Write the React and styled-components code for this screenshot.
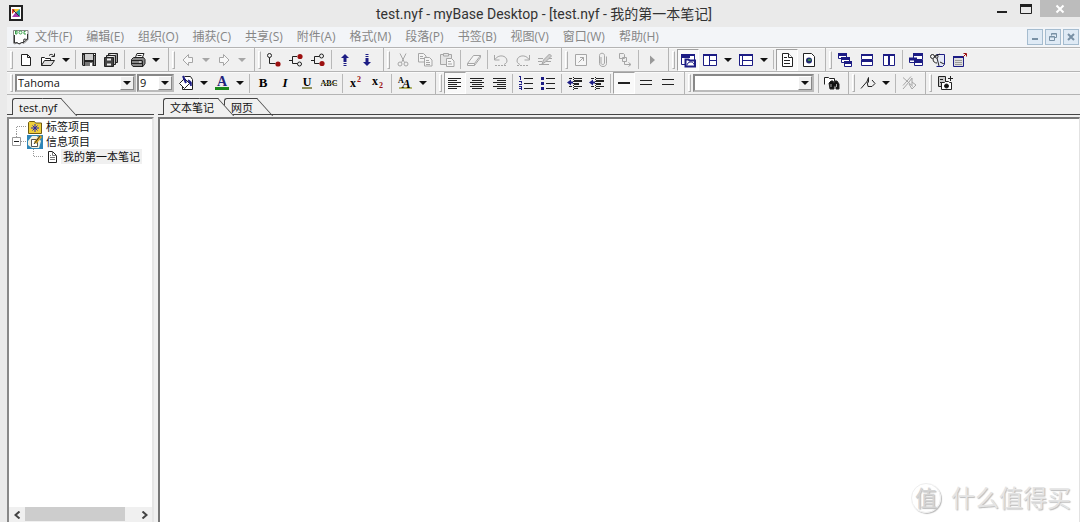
import React, { useState } from 'react'
import styled, { createGlobalStyle } from 'styled-components'

const navy = '#1c1c84'
const ink = '#222'
const faded = '#a6a6a6'
const red = '#9c1010'

const icons = {
    page: <path d="M3.5 2.5h6l3 3v8h-9zM9.5 2.5v3h3" fill="#fff" stroke={ink} />,
    open: (
        <g fill="none" stroke={ink}>
            <path d="M1.5 13.5v-8h3l1 1h5v2" fill="#fff" />
            <path d="M1.5 13.5l3-5h10l-3.5 5z" fill="#ddd" />
            <path d="M9 3.5c1.5-1.5 3-1.5 4.5 0M14.5 1.5v3h-3" />
        </g>
    ),
    save: (
        <g>
            <path d="M1 1h14v13h-13l-1-1z" fill={ink} />
            <path d="M4 2h8v6h-8z" fill="#ccc" />
            <path d="M4 10h8v4h-8z" fill="#777" />
            <path d="M9 11h2v3h-2zM13 2h1v1h-1z" fill="#fff" />
            <path d="M2.5 3v10M13.5 4v9" stroke="#888" />
        </g>
    ),
    saveAll: (
        <g stroke={ink}>
            <path d="M5.5 1.5h9v9h-9z" fill="#999" />
            <path d="M3.5 3.5h9v9h-9z" fill="#bbb" />
            <path d="M1.5 5.5h9v9h-9z" fill="#444" />
            <path d="M4 7.5h4M4 12.5h4" stroke="#eee" strokeWidth="2" />
            <path d="M7.5 2.5h5M5.5 4.5h5" stroke="#eee" />
        </g>
    ),
    print: (
        <g stroke={ink}>
            <path d="M5 6.5l2-5h7l-2 5" fill="#fff" />
            <path d="M1.5 7.5l2-2h10l1.5 2v4l-2 3h-10l-1.5-2z" fill="#888" />
            <path d="M2 8.5h10M2 11.5h10M12.5 8.5v5.5M7.5 3.5h4" />
            <path d="M9 10h2" stroke="#fff" />
        </g>
    ),
    back: <path d="M3 8l5.5-5.5v3h4v5h-4v3z" fill="#f7f7f7" stroke={faded} />,
    forward: <path d="M13 8l-5.5-5.5v3h-4v5h4v3z" fill="#f7f7f7" stroke={faded} />,
    addSub: (
        <g fill="none" stroke={ink}>
            <circle cx="3.500" cy="3.5" r="2" />
            <path d="M3.5 5.500v6h6" />
            <circle cx="12" cy="12" r="2.600" fill={red} stroke="none" />
        </g>
    ),
    addBefore: (
        <g fill="none" stroke={ink}>
            <path d="M9 4.5h-4.5v7h5M1 8.5h3.500" />
            <circle cx="11.5" cy="12" r="2" />
            <circle cx="12" cy="4.500" r="2.600" fill={red} stroke="none" />
        </g>
    ),
    addAfter: (
        <g fill="none" stroke={ink}>
            <path d="M9 4.5h-4.5v7h5M1 8.5h3.500" />
            <circle cx="11.5" cy="4" r="2" />
            <circle cx="12" cy="11.500" r="2.600" fill={red} stroke="none" />
        </g>
    ),
    up: <path d="M8 2l4 4h-2.500v4h-3v-4h-2.500zM6.500 11h3v1h-3zM6.500 13h3v1h-3z" fill={navy} />,
    down: <path d="M8 14l-4-4h2.500v-4h3v4h2.500zM6.500 4h3v1h-3zM6.500 2h3v1h-3z" fill={navy} />,
    cut: (
        <g fill="none" stroke={faded}>
            <path d="M5 1.5l4.500 9M11 1.5l-4.500 9" />
            <circle cx="5" cy="12" r="2" />
            <circle cx="11" cy="12" r="2" />
        </g>
    ),
    copy: (
        <g fill="#f4f4f4" stroke={faded}>
            <path d="M1.5 1.5h5l2.500 2.500v6h-7.500z" />
            <path d="M7.5 5.5h5l2.500 2.500v6h-7.500z" />
            <path d="M3 4.5h3M3 6.5h4M9 8.5h3M9 10.5h4M9 12.5h4" />
        </g>
    ),
    paste: (
        <g fill="#e4e4e4" stroke={faded}>
            <path d="M1.5 2.5h11v10h-11z" />
            <path d="M4.5 1.5h5v2.500h-5z" />
            <path d="M7.5 6.5h5l2.500 2.500v5.500h-7.500z" fill="#f6f6f6" />
            <path d="M9 9.5h3M9 12h4" />
        </g>
    ),
    eraser: <path d="M1.5 11.5l6-8h7l-6 8zM1.5 11.5v2h7l6-8v-2M8.5 11.5v2" fill="#f6f6f6" stroke={faded} />,
    undo: (
        <g fill="none" stroke={faded}>
            <path d="M1.5 3v5h5M2 7.5c3-5.500 12-4.500 12 1.500 0 2-2 3-3 3.500" />
            <path d="M2 13.5h12" strokeDasharray="2 1" />
        </g>
    ),
    redo: (
        <g fill="none" stroke={faded}>
            <path d="M14.5 3v5h-5M14 7.5c-3-5.500-12-4.500-12 1.500 0 2 2 3 3 3.500" />
            <path d="M2 13.5h12" strokeDasharray="2 1" />
        </g>
    ),
    brush: (
        <g fill="none" stroke={faded}>
            <path d="M5 12l1.500-4 6-6 2 2-6 6z" fill="#ccc" />
            <path d="M1 6.5h5M1 9.5h4M9 9.5h5M2 12.5h10M12 6.5h3" />
        </g>
    ),
    link: (
        <g fill="none" stroke={faded}>
            <path d="M2.5 2.5h11v11h-11z" fill="#f6f6f6" />
            <path d="M5.5 10.5l5-5M7 5.5h3.500v3.500" />
        </g>
    ),
    clip: <path d="M6 5v6c0 2 3.500 2 3.500 0v-7.500c0-3-5-3-5 0v8c0 4 7 4 7 0v-7" fill="none" stroke={faded} />,
    moveTo: (
        <g fill="none" stroke={faded}>
            <path d="M2.5 1.5h4l1 1v4h-5zM5.5 5.5h4v4h-4z" fill="#eee" />
            <path d="M7.5 10v2.500h6M11.500 10.5l2.500 2-2.500 2" />
        </g>
    ),
    play: <path d="M6 3.5l5 4.500-5 4.500z" fill="#999" />,
    layoutTree: (
        <g fill="#fff" stroke={navy}>
            <path d="M1.5 2.5h13v10h-13z" />
            <path d="M1 3h14M1 5h9" strokeWidth="2" />
            <path d="M5.5 14.5v-7h3l1 1h5.500v6z" strokeWidth="2" />
            <path d="M7 13.500c0-4 6-5 7-1" fill="none" />
        </g>
    ),
    layoutSplit: (
        <g fill="#fff" stroke={navy}>
            <path d="M1.5 2.5h13v11h-13z" />
            <path d="M1 3h14" strokeWidth="2" />
            <path d="M7.5 3v11M8 8.5h6" />
        </g>
    ),
    layoutList: (
        <g fill="#fff" stroke={navy}>
            <path d="M1.5 2.5h13v11h-13z" />
            <path d="M1 3h14" strokeWidth="2" />
            <path d="M4.5 3v11M5 8.5h9" />
        </g>
    ),
    note: (
        <g fill="#fff" stroke={ink}>
            <path d="M3.5 1.5h6l4 4v9h-10z" />
            <path d="M9.5 1.5v4h4M5 5.5h3M5 8.5h6M5 11.5h6" />
        </g>
    ),
    web: (
        <g fill="#fff" stroke={ink}>
            <path d="M2.5 1.5h8l3 3v10h-11z" />
            <circle cx="8" cy="8.500" r="3" fill="#222b70" stroke="none" />
            <path d="M7 7h3v2h-3z" fill="#3c8b45" stroke="none" />
        </g>
    ),
    cascade: (
        <g fill="#fff" stroke={navy}>
            <path d="M1.5 1.5h8v5h-8zM4.5 5.5h8v5h-8zM7.5 9.5h7v5h-7z" />
            <path d="M1 2.5h9M4 6.5h9M7 10.5h8" strokeWidth="3" />
        </g>
    ),
    tileRows: (
        <g fill="#fff" stroke={navy}>
            <path d="M2.5 2.5h11v5h-11zM2.5 8.5h11v5h-11z" />
            <path d="M2 3h12M2 9h12" strokeWidth="2" />
        </g>
    ),
    tileColumns: (
        <g fill="#fff" stroke={navy}>
            <path d="M2.5 2.5h5v11h-5zM8.5 2.5h5v11h-5z" />
            <path d="M2 3h12" strokeWidth="2" />
        </g>
    ),
    windows: (
        <g fill="#fff" stroke={navy}>
            <path d="M5.5 1.5h9v6h-9zM1.5 6.5h7v4h-7zM6.5 8.5h8v5h-8z" />
            <path d="M5 2.5h10M1 7h8M6 9.5h9" strokeWidth="3" />
        </g>
    ),
    relations: (
        <g fill="none" stroke={ink}>
            <path d="M6.5 2.5h8v10l-2 2h-6" stroke={navy} fill="#e4e8f6" />
            <circle cx="2.500" cy="4.500" r="2" />
            <circle cx="6.500" cy="4.500" r="1.500" />
            <path d="M4 5l6-3M3 7c0 3 2 4 4 4M7 6l2 8M10 10l4 2" />
        </g>
    ),
    popup: (
        <g fill="#ddd" stroke={navy}>
            <path d="M1.5 4.5h10v10h-10z" />
            <path d="M1 5h11" strokeWidth="2" />
            <path d="M3 8.5h7M3 10.5h7M3 12.5h7" stroke="#999" />
            <path d="M11 5l3-3M11.5 1.5h3v3" stroke={red} fill="none" />
        </g>
    ),
    fill: (
        <g fill="#fff" stroke={ink}>
            <path d="M6.5 1.5h6l2 3v10h-10v-9" />
            <path d="M1.5 8.5l5-5 5 5-5 5z" />
            <path d="M5 1l3 7" stroke={navy} strokeWidth="2" />
            <path d="M10 5c3 1 4 2 3 6l-2-4z" fill={navy} stroke={navy} />
        </g>
    ),
    fontColor: (
        <g>
            <text x="8" y="11" textAnchor="middle" fontSize="14" fill="#23237c">A</text>
            <path d="M1 12h14v3h-14z" fill="#1b8a1b" />
        </g>
    ),
    underline: (
        <g>
            <text x="8" y="11" textAnchor="middle" fontSize="12">U</text>
            <path d="M3 12h10v2h-10z" fill="#8c8c58" />
        </g>
    ),
    strike: (
        <g>
            <text x="8" y="11" textAnchor="middle" fontSize="8">ABC</text>
            <path d="M0 8h16v1h-16z" fill="#8c8c58" />
        </g>
    ),
    bold: <text x="8" y="12" textAnchor="middle" fontSize="13">B</text>,
    italic: <text x="8" y="12" textAnchor="middle" fontSize="13" fontStyle="italic">I</text>,
    superscript: (
        <g>
            <text x="2" y="12" fontSize="12">x</text>
            <text x="9" y="7" fontSize="8" fill={red}>2</text>
        </g>
    ),
    subscript: (
        <g>
            <text x="2" y="10" fontSize="12">x</text>
            <text x="9" y="13" fontSize="8" fill={red}>2</text>
        </g>
    ),
    fontStyle: (
        <g>
            <path d="M2 12h13v2h-13z" fill="#b5b56a" />
            <text x="1" y="8" fontSize="8">A</text>
            <text x="5" y="13" fontSize="13" fontStyle="italic">A</text>
        </g>
    ),
    alignLeft: <path d="M1 3.5h13M1 5.5h9M1 7.5h13M1 9.5h9M1 11.5h13M1 13.5h9" stroke={ink} />,
    alignCenter: <path d="M1 3.5h14M3 5.5h10M1 7.5h14M3 9.5h10M1 11.5h14M3 13.5h10" stroke={ink} />,
    alignRight: <path d="M2 3.5h13M6 5.5h9M2 7.5h13M6 9.5h9M2 11.5h13M6 13.5h9" stroke={ink} />,
    numbers: (
        <g>
            <path d="M6 3.5h9M6 8.5h9M6 13.5h9" stroke={ink} />
            <path d="M2.5 1v4M1 1.5h2M1 6.5h3M3.5 7v1.500M1 9.5h3M1 11.5h3M1 13.5h3M3.5 11v4" stroke={navy} />
        </g>
    ),
    bullets: (
        <g>
            <path d="M6 3.5h9M6 8.5h9M6 13.5h9" stroke={ink} />
            <path d="M1 2h3v3h-3zM1 7h3v3h-3zM1 12h3v3h-3z" fill={navy} />
        </g>
    ),
    outdent: (
        <g>
            <path d="M7 3.5h8M7 11.5h8M7 13.5h4" stroke={ink} />
            <path d="M7 6h8M7 9h5" stroke={ink} strokeWidth="2" />
            <path d="M2 3.5h3M2 11.5h3" stroke={ink} />
            <path d="M0 7.5l4-3v2h2v2h-2v2z" fill={navy} />
            <path d="M6.5 2v13" stroke={ink} strokeDasharray="1 1" />
        </g>
    ),
    lineSingle: <path d="M2 8h12" stroke={ink} strokeWidth="2" />,
    lineHalf: <path d="M2 5.5h12M2 9.5h12" stroke={ink} />,
    lineDouble: <path d="M2 4.5h12M2 9.5h12" stroke={ink} />,
    find: (
        <g stroke={ink}>
            <path d="M0.5 9.5v-7h4l1 1h5v3" fill="#fff" />
            <path d="M5 8l2-2h2l1 2 1-2h2l2 3v5h-3v-3h-2v3h-4z" fill="#111" />
            <path d="M7 9v3M12.500 9v3" stroke="#aaa" />
        </g>
    ),
    marker: <path d="M1 13.5l6-7 1.500-4v5M7 6.500l1 5h4l3-3-3-3.500" fill="none" stroke={ink} />,
    markerOff: <path d="M2 14l6-7 3-4v7M8 9l3 5 4-4-4-3M2 2.5l10 9M10 1.5l-8 9" fill="none" stroke={faded} />,
    snapshot: (
        <g stroke={ink}>
            <path d="M1.5 1.5h7v10h-7z" fill="#ccc" />
            <path d="M3 4.5h3M3 7.5h3M11 3.5h5M13.5 1v5" />
            <path d="M4.5 7.5h3l1-1h3l1 1h2v7h-10z" fill="#fff" />
            <circle cx="9.500" cy="11" r="2" fill="#111" />
        </g>
    ),
}

const topBands = [
    [
        { icon: 'page', label: 'New' }, { icon: 'open', label: 'Open', drop: true }, { sep: true },
        { icon: 'save', label: 'Save' }, { icon: 'saveAll', label: 'Save all' }, { sep: true },
        { icon: 'print', label: 'Print', drop: true },
    ],
    [{ icon: 'back', label: 'Back', drop: true, off: true }, { icon: 'forward', label: 'Forward', drop: true, off: true }],
    [
        { icon: 'addSub', label: 'Add child' }, { icon: 'addBefore', label: 'Add before' }, { icon: 'addAfter', label: 'Add after' },
        { sep: true }, { icon: 'up', label: 'Move up' }, { icon: 'down', label: 'Move down' },
    ],
    [
        { icon: 'cut', label: 'Cut', off: true }, { icon: 'copy', label: 'Copy', off: true }, { icon: 'paste', label: 'Paste', off: true },
        { sep: true }, { icon: 'eraser', label: 'Erase', off: true }, { sep: true },
        { icon: 'undo', label: 'Undo', off: true }, { icon: 'redo', label: 'Redo', off: true }, { icon: 'brush', label: 'Format', off: true },
    ],
    [
        { icon: 'link', label: 'Link', off: true }, { icon: 'clip', label: 'Attach', off: true }, { icon: 'moveTo', label: 'Move to', off: true },
        { sep: true }, { icon: 'play', label: 'Run', off: true },
    ],
    [
        { icon: 'layoutTree', label: 'Tree view', on: true }, { icon: 'layoutSplit', label: 'Split view', drop: true },
        { icon: 'layoutList', label: 'List view', drop: true }, { sep: true },
        { icon: 'note', label: 'Note view', on: true }, { icon: 'web', label: 'Web view' },
    ],
    [
        { icon: 'cascade', label: 'Cascade' }, { icon: 'tileRows', label: 'Tile rows' }, { icon: 'tileColumns', label: 'Tile columns' },
        { sep: true }, { icon: 'windows', label: 'Windows' }, { icon: 'relations', label: 'Relations' }, { icon: 'popup', label: 'Pop up' },
    ],
]

const formatBands = [
    [
        { combo: 'font', label: 'Font', options: ['Tahoma', 'Arial', 'Verdana'] },
        { combo: 'size', label: 'Font size', options: ['9', '10', '12'] },
        { icon: 'fill', label: 'Fill color', drop: true }, { icon: 'fontColor', label: 'Font color', drop: true }, { sep: true },
        { icon: 'bold', label: 'Bold' }, { icon: 'italic', label: 'Italic' }, { icon: 'underline', label: 'Underline' },
        { icon: 'strike', label: 'Strikethrough' }, { sep: true },
        { icon: 'superscript', label: 'Superscript' }, { icon: 'subscript', label: 'Subscript' }, { sep: true },
        { icon: 'fontStyle', label: 'Font style', drop: true },
    ],
    [
        { icon: 'alignLeft', label: 'Align left', on: true }, { icon: 'alignCenter', label: 'Align center' },
        { icon: 'alignRight', label: 'Align right' }, { sep: true },
        { icon: 'numbers', label: 'Numbering' }, { icon: 'bullets', label: 'Bullets' }, { sep: true },
        { icon: 'outdent', label: 'Outdent' }, { icon: 'outdent', label: 'Indent' }, { sep: true },
        { icon: 'lineSingle', label: 'Single spacing', on: true }, { icon: 'lineHalf', label: '1.5 spacing' },
        { icon: 'lineDouble', label: 'Double spacing' },
    ],
    [{ combo: 'search', label: 'Search', options: [''] }, { sep: true }, { icon: 'find', label: 'Find' }],
    [{ icon: 'marker', label: 'Bookmark', drop: true }, { sep: true }, { icon: 'markerOff', label: 'Clear bookmark', off: true }],
    [{ icon: 'snapshot', label: 'Snapshot' }],
]

const menus = ['文件(F)', '编辑(E)', '组织(O)', '捕获(C)', '共享(S)', '附件(A)', '格式(M)', '段落(P)', '书签(B)', '视图(V)', '窗口(W)', '帮助(H)']

const Icon = ({ name }) => (
    <IconSvg width="16" height="16" viewBox="0 0 16 16" aria-hidden="true">{icons[name]}</IconSvg>
)

const Arrow = () => (
    <svg width="8" height="4" viewBox="0 0 8 4" aria-hidden="true"><path d="M0 0h8l-4 4z" fill="currentColor" /></svg>
)

const ToolItem = ({ item }) => {
    if (item.sep) return <Separator />
    if (item.combo) {
        return (
            <Combo $kind={item.combo}>
                <select aria-label={item.label}>
                    {item.options.map((o) => <option key={o}>{o}</option>)}
                </select>
                <ComboArrow><Arrow /></ComboArrow>
            </Combo>
        )
    }
    return (
        <>
            <ToolButton $on={item.on} aria-label={item.label} disabled={item.off}><Icon name={item.icon} /></ToolButton>
            {item.drop && <DropButton aria-label={item.label + ' options'} disabled={item.off}><Arrow /></DropButton>}
        </>
    )
}

const Toolbar = ({ bands }) => (
    <ToolRow>
        {bands.map((band, i) => (
            <Band key={i} $last={i === bands.length - 1}>
                <Grip />
                {band.map((item, j) => <ToolItem key={j} item={item} />)}
            </Band>
        ))}
    </ToolRow>
)

const App = () => {
    const [tab, setTab] = useState('文本笔记')
    return (
        <Window>
            <GlobalStyle />
            <TitleBar>
                <AppIcon width="16" height="16" viewBox="0 0 16 16" aria-hidden="true">
                    <path d="M2 1h12v14h-12z" fill="#fff" stroke="#222" strokeWidth="2" />
                    <path d="M4 4h5l-5 5z" fill="#e0402c" />
                    <path d="M6 4h6l-4 4z" fill="#edc62e" />
                    <path d="M12 4v8l-5-4z" fill="#219f9e" />
                    <path d="M4 12l4-5 4 5z" fill="#a339ad" />
                    <path d="M5 5l6 6" stroke="#333" />
                </AppIcon>
                <Title>test.nyf - myBase Desktop - [test.nyf - 我的第一本笔记]</Title>
                <WindowButtons>
                    <CaptionButton aria-label="Minimize">
                        <svg width="12" height="12" viewBox="0 0 12 12"><path d="M1 9h10" stroke="#222" strokeWidth="2" /></svg>
                    </CaptionButton>
                    <CaptionButton aria-label="Maximize">
                        <svg width="12" height="12" viewBox="0 0 12 12"><path d="M0.5 1.5h11v9h-11z" fill="none" stroke="#222" /><path d="M0 2.5h12" stroke="#222" strokeWidth="3" /></svg>
                    </CaptionButton>
                    <CloseButton aria-label="Close">
                        <svg width="10" height="10" viewBox="0 0 10 10"><path d="M1.5 1.5l7 7M8.500 1.5l-7 7" stroke="#fff" strokeWidth="2" /></svg>
                    </CloseButton>
                </WindowButtons>
            </TitleBar>
            <Body>
                <MenuBar>
                    <svg width="16" height="16" viewBox="0 0 16 16" aria-hidden="true">
                        <path d="M0.5 1.5h14.500v9l-4 4-2-1-2 1.500-3-1-2.500 1-1-1z" fill="#fff" stroke="#888" />
                        <path d="M1.5 6v8l2.500-0.500 2 1.500 2.500-1.500h2l4-3.500v-5" fill="none" stroke="#333" />
                        <path d="M10.5 13.500l0.500-3.500 3.500 0.500" fill="none" stroke="#333" />
                        <path d="M2.5 2v3h1.500v-3zM12.500 2.500h-1.500v2.500h2" fill="none" stroke="#39a04a" />
                        <circle cx="7.500" cy="3.500" r="1.500" fill="none" stroke="#39a04a" />
                    </svg>
                    <MenuItems>
                        {menus.map((m) => <MenuItem key={m}>{m}</MenuItem>)}
                    </MenuItems>
                    <ChildButton aria-label="Minimize note">
                        <svg width="10" height="10" viewBox="0 0 10 10"><path d="M2 7h6" stroke="#7890a5" strokeWidth="2" /></svg>
                    </ChildButton>
                    <ChildButton aria-label="Restore note">
                        <svg width="10" height="10" viewBox="0 0 10 10"><path d="M3.5 3.5v-2h5v4h-2M1.5 4.5h5v4h-5zM3.5 2h5M1.5 5h5" fill="none" stroke="#7890a5" /></svg>
                    </ChildButton>
                    <ChildButton aria-label="Close note">
                        <svg width="10" height="10" viewBox="0 0 10 10"><path d="M2 2l6 6M8 2l-6 6" stroke="#7890a5" strokeWidth="2" /></svg>
                    </ChildButton>
                </MenuBar>
                <Toolbar bands={topBands} />
                <Toolbar bands={formatBands} />
                <Main>
                    <Sidebar>
                        <TabStrip>
                            <Tab $active>test.nyf</Tab>
                        </TabStrip>
                        <TreePanel>
                            <Tree>
                                <TreeRow>
                                    <Branch><path d="M4.5 8v8M5 7.5h10" /></Branch>
                                    <svg width="16" height="14" viewBox="0 0 16 14" aria-hidden="true">
                                        <path d="M1.5 13.5v-11l1-1h5l1 1.500h6v10.500z" fill="#efcf3a" stroke="#6f5b12" />
                                        <path d="M8 4v8M4 8h8M5.5 5.5l5 5M10.500 5.5l-5 5" stroke="#2626b0" />
                                    </svg>
                                    <NodeLabel>标签项目</NodeLabel>
                                </TreeRow>
                                <TreeRow>
                                    <Branch>
                                        <path d="M4.5 0v4M9 7.5h6" />
                                        <path d="M0.5 3.5h8v8h-8z" fill="#fff" stroke="#999" strokeDasharray="none" />
                                        <path d="M2 7.5h5" stroke="#222" strokeDasharray="none" />
                                    </Branch>
                                    <svg width="16" height="14" viewBox="0 0 16 14" aria-hidden="true">
                                        <path d="M0 0h16v14h-16z" fill="#2f86b8" />
                                        <path d="M1 6l4-5h5l4 5-2 7h-7l-4-3z" fill="#f1f1e0" />
                                        <path d="M4.5 4.5h6v7h-6z" fill="#fff" stroke="#555" />
                                        <path d="M8 8l6-7" stroke="#d7a41f" strokeWidth="3" />
                                        <path d="M7 9l6-8" stroke="#333" />
                                    </svg>
                                    <NodeLabel>信息项目</NodeLabel>
                                </TreeRow>
                                <TreeRow $nested>
                                    <Branch><path d="M4.5 0v8M5 7.5h10" /></Branch>
                                    <svg width="16" height="14" viewBox="0 0 16 14" aria-hidden="true">
                                        <path d="M4.5 1.5h4l4 4v7h-8z" fill="#fff" stroke="#222" />
                                        <path d="M8.5 1.5v4h4M6 5.5h1M6 7.5h5M6 9.5h5" stroke="#777" fill="none" />
                                    </svg>
                                    <NodeLabel $picked>我的第一本笔记</NodeLabel>
                                </TreeRow>
                            </Tree>
                            <ScrollBar>
                                <ScrollButton aria-label="Scroll left">
                                    <svg width="7" height="8" viewBox="0 0 7 8"><path d="M5.5 0.500l-4 3.500 4 3.500" fill="none" stroke="#444" strokeWidth="2" /></svg>
                                </ScrollButton>
                                <ScrollTrack><ScrollThumb /></ScrollTrack>
                                <ScrollButton aria-label="Scroll right">
                                    <svg width="7" height="8" viewBox="0 0 7 8"><path d="M1.5 0.500l4 3.500-4 3.500" fill="none" stroke="#444" strokeWidth="2" /></svg>
                                </ScrollButton>
                            </ScrollBar>
                        </TreePanel>
                    </Sidebar>
                    <Content>
                        <TabStrip>
                            {['文本笔记', '网页'].map((t) => (
                                <Tab key={t} $active={tab === t} onClick={() => setTab(t)}>{t}</Tab>
                            ))}
                        </TabStrip>
                        <Editor aria-label="Note" />
                        <Watermark>
                            <Seal>值</Seal>
                            什么值得买
                        </Watermark>
                    </Content>
                </Main>
            </Body>
        </Window>
    )
}

export default App

const GlobalStyle = createGlobalStyle`
    * {
        box-sizing: border-box;
    }
    body {
        margin: 0;
        background: #eaeaea;
        font-family: "Open Sans", "Noto Sans CJK SC", sans-serif;
        font-size: 12px;
        color: #111;
    }
    button, select, textarea {
        font: inherit;
        color: inherit;
        padding: 0;
        border: none;
        border-radius: 0;
        background: none;
    }
    svg {
        display: block;
        flex: none;
    }
`
const Window = styled.div`
    min-height: 100vh;
    display: flex;
    flex-direction: column;
    background: #eaeaea;
`
const TitleBar = styled.header`
    display: grid;
    grid-template-columns: 1fr auto 1fr;
    height: 27px;
    padding-left: 8px;
`
const AppIcon = styled.svg`
    margin-top: 5px;
`
const Title = styled.div`
    font-family: Roboto, "Noto Sans CJK SC", sans-serif;
    font-size: 14px;
    line-height: 28px;
    color: #333;
    white-space: nowrap;
`
const WindowButtons = styled.div`
    display: flex;
    justify-content: flex-end;
    align-items: flex-start;
`
const CaptionButton = styled.button`
    width: 24px;
    height: 17px;
    display: flex;
    justify-content: center;
    align-items: center;
`
const CloseButton = styled(CaptionButton)`
    width: 40px;
    margin-left: 2px;
    background: #bcbcbc;
`
const Body = styled.div`
    flex: 1;
    display: flex;
    flex-direction: column;
    margin-left: 7px;
    background: #f0f0f0;
`
const MenuBar = styled.nav`
    display: flex;
    align-items: center;
    gap: 2px;
    height: 20px;
    padding: 0 1px 0 6px;
    background: #f3f5f8;
`
const MenuItems = styled.div`
    flex: 1;
    display: flex;
    gap: 14px;
    padding-left: 4px;
`
const MenuItem = styled.button`
    line-height: 18px;
    color: #868686;
    white-space: nowrap;
`
const ChildButton = styled.button`
    width: 16px;
    height: 16px;
    display: flex;
    justify-content: center;
    align-items: center;
    background: #dfeaf5;
    border: 1px solid #a5bccf;
`
const ToolRow = styled.div`
    display: flex;
    height: 24px;
    border-top: 1px solid #b4b4b4;
    box-shadow: inset 0 1px 0 #fafafa;

    & + & {
        border-bottom: 1px solid #b4b4b4;
    }
`
const Band = styled.div`
    display: flex;
    align-items: center;
    flex: ${(p) => (p.$last ? '1' : 'none')};
    padding-right: 5px;
    border-right: ${(p) => (p.$last ? 'none' : '1px solid #b4b4b4')};
`
const Grip = styled.span`
    width: 3px;
    height: 18px;
    margin: 0 2px 0 3px;
    border: 1px solid #b0b0b0;
    border-top-color: #fff;
    border-left-color: #fff;
`
const IconSvg = styled.svg`
    overflow: visible;

    text{
        font-family: "Liberation Serif", serif;
        font-weight: 700;
    }
`
const ToolButton = styled.button`
    width: 22px;
    height: 22px;
    display: flex;
    justify-content: center;
    align-items: center;
    border: 1px solid;
    border-color: ${(p) => (p.$on ? '#a0a0a0 #fff #fff #a0a0a0' : 'transparent')};
    background: ${(p) => (p.$on ? '#f9f9f9' : 'none')};
`
const DropButton = styled.button`
    width: 14px;
    height: 22px;
    display: flex;
    justify-content: center;
    align-items: center;
    color: #111;

    &:disabled{
        color: #a6a6a6;
    }
`
const Separator = styled.span`
    width: 1px;
    height: 19px;
    margin: 0 2px;
    background: #b8b8b8;
`
const comboWidth = { font: '121px', size: '37px', search: '121px' }
const Combo = styled.span`
    position: relative;
    width: ${(p) => comboWidth[p.$kind]};
    height: 18px;
    margin-right: ${(p) => (p.$kind === 'search' ? '2px' : '1px')};

    select{
        width: 100%;
        height: 100%;
        padding-left: 1px;
        appearance: none;
        background: #fff;
        border: 2px solid #888;
        border-right-color: #bbb;
        border-bottom-color: #bbb;
        font-size: 11px;
        line-height: 14px;
    }
`
const ComboArrow = styled.span`
    position: absolute;
    top: 2px;
    right: 2px;
    width: 14px;
    height: 14px;
    display: flex;
    justify-content: center;
    align-items: center;
    background: #f0f0f0;
    border: 1px solid #fff;
    border-right-color: #888;
    border-bottom-color: #888;
    pointer-events: none;
`
const Main = styled.main`
    flex: 1;
    display: flex;
    gap: 4px;
`
const Sidebar = styled.aside`
    width: 147px;
    display: flex;
    flex-direction: column;
`
const Content = styled.section`
    position: relative;
    flex: 1;
    display: flex;
    flex-direction: column;
`
const TabStrip = styled.div`
    position: relative;
    display: flex;
    gap: 6px;
    height: 22px;
    padding: 3px 0 2px 5px;

    &::before{
        content: "";
        position: absolute;
        left: 0;
        right: 0;
        bottom: 2px;
        height: 1px;
        background: #444;
    }
`
const Tab = styled.button`
    position: relative;
    z-index: ${(p) => (p.$active ? '2' : '1')};
    height: 17px;
    padding: 0 4px 0 6px;
    border-top: 1px solid #444;
    border-left: 1px solid #444;
    border-top-left-radius: 3px;
    background: ${(p) => (p.$active ? '#f0f0f0' : 'none')};
    font-size: 11px;
    line-height: 15px;
    white-space: nowrap;

    /* slanted right edge, it also hides the strip line under the active tab */
    &::after{
        content: "";
        position: absolute;
        z-index: -1;
        top: -1px;
        right: 0;
        width: 18px;
        height: 17px;
        border-top: 1px solid #444;
        border-right: 1px solid #444;
        background: ${(p) => (p.$active ? '#f0f0f0' : 'none')};
        transform: skewX(42deg);
        transform-origin: top;
    }
`
const TreePanel = styled.div`
    flex: 1;
    display: flex;
    flex-direction: column;
    background: #fff;
    border-top: 2px solid #888;
    border-left: 2px solid #888;
    border-right: 2px solid #e6e6e6;
`
const Tree = styled.ul`
    flex: 1;
    margin: 0;
    padding: 0 0 0 3px;
    list-style: none;
`
const TreeRow = styled.li`
    display: flex;
    align-items: center;
    height: 15px;
    padding-left: ${(p) => (p.$nested ? '17px' : '0')};
`
const BranchSvg = styled.svg`
    fill: none;
    stroke: #999;
    stroke-dasharray: 1 1;
`
const Branch = ({ children }) => (
    <BranchSvg width="15" height="15" viewBox="0 0 15 15" aria-hidden="true">{children}</BranchSvg>
)
const NodeLabel = styled.span`
    margin-left: 1px;
    padding: 0 2px;
    font-size: 11px;
    line-height: 15px;
    white-space: nowrap;
    background: ${(p) => (p.$picked ? '#f0f0f0' : 'none')};
`
const ScrollBar = styled.div`
    display: flex;
    height: 15px;
    background: #f0f0f0;
`
const ScrollButton = styled.button`
    width: 16px;
    display: flex;
    justify-content: center;
    align-items: center;
`
const ScrollTrack = styled.div`
    flex: 1;
`
const ScrollThumb = styled.div`
    width: 90%;
    height: 14px;
    background: #cdcdcd;
`
const Editor = styled.textarea`
    flex: 1;
    background: #fff;
    border-top: 2px solid #777;
    border-left: 2px solid #777;
    border-right: 1px solid #e2e2e2;
    resize: none;
    outline: none;
`
const Watermark = styled.div`
    position: absolute;
    right: 9px;
    bottom: 8px;
    display: flex;
    align-items: center;
    gap: 10px;
    font-size: 24px;
    line-height: 32px;
    color: #e4e4e4;
    text-shadow: 1px 1px 1px #bbb;
    pointer-events: none;
`
const Seal = styled.span`
    width: 30px;
    height: 30px;
    border: 1px solid #eee;
    border-radius: 50%;
    box-shadow: 1px 1px 1px #bbb;
    font-size: 22px;
    line-height: 27px;
    text-align: center;
    color: #d4d4d4;
`
